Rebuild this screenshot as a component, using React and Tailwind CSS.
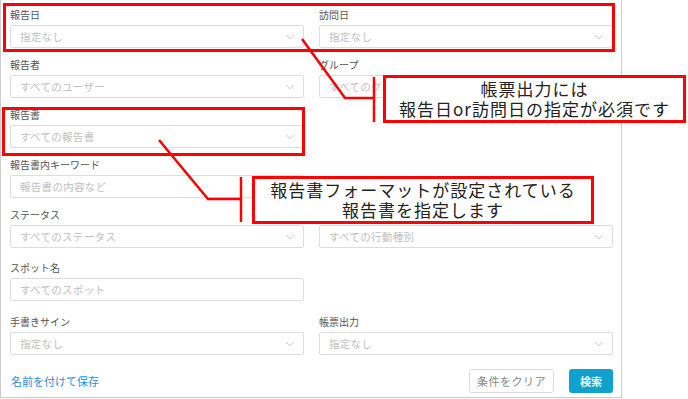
import { ChevronDown } from "lucide-react"

const font = { fontFamily: '"Noto Sans CJK JP", "Noto Sans", sans-serif' }

function Field({ label, placeholder, select = true, className = "" }) {
  return (
    <div className={className}>
      <p className="h-4 text-[10px] leading-4 text-[#555]">{label}</p>
      <div className="mt-[2px] h-[23px] border border-[#ddd] rounded-[2px] flex items-center justify-between pl-[9px] pr-[6px]">
        <span className="text-[10.5px] text-[#c0c0c0] tracking-[0.3px] whitespace-nowrap overflow-hidden">{placeholder}</span>
        {select && <ChevronDown size={14} strokeWidth={1.2} className="text-[#aaa] shrink-0" />}
      </div>
    </div>
  )
}

export default function App() {
  return (
    <div className="relative w-[688px] h-[399px] bg-white overflow-hidden" style={font}>
      {/* パネル */}
      <div className="w-[622px] h-[398px] border-x border-b border-[#ccc] pl-[9px] pr-[8px] pt-[7px]">
        <div className="grid grid-cols-2 gap-x-[15px] gap-y-[9px]">
          <Field label="報告日" placeholder="指定なし" />
          <Field label="訪問日" placeholder="指定なし" />
          <Field label="報告者" placeholder="すべてのユーザー" />
          <Field label="グループ" placeholder="すべてのグル" />
          <Field label="報告書" placeholder="すべての報告書" />
          <div />
          <Field label="報告書内キーワード" placeholder="報告書の内容など" select={false} />
          <div />
          <Field label="ステータス" placeholder="すべてのステータス" />
          <Field label="" placeholder="すべての行動種別" />
        </div>
        <div className="grid grid-cols-2 gap-x-[15px] mt-[12px]">
          <Field label="スポット名" placeholder="すべてのスポット" select={false} />
          <div />
        </div>
        <div className="grid grid-cols-2 gap-x-[15px] mt-[13px]">
          <Field label="手書きサイン" placeholder="指定なし" />
          <Field label="帳票出力" placeholder="指定なし" />
        </div>
        <div className="flex items-center justify-between mt-[14px]">
          <a className="text-[11px] text-[#2a8de0] pl-[1px]">名前を付けて保存</a>
          <div className="flex gap-[15px]">
            <button className="w-[85px] h-[24px] border border-[#ddd] rounded-[3px] text-[11px] text-[#888] tracking-[0.5px]">
              条件をクリア
            </button>
            <button className="w-[44px] h-[24px] rounded-[3px] bg-[#10a2cb] text-[11px] text-white font-bold">
              検索
            </button>
          </div>
        </div>
      </div>

      {/* 注釈 */}
      <div className="absolute left-[3px] top-[3px] w-[612px] h-[49px] border-[3px] border-[#f00]" />
      <div className="absolute left-[2px] top-[107px] w-[303px] h-[49px] border-[3px] border-[#f00]" />
      <svg className="absolute left-0 top-0" width="688" height="399">
        <g stroke="#f00" strokeWidth="2.5" fill="none">
          <polyline points="302,39 345,98 373,98" />
          <line x1="374" y1="77" x2="374" y2="122" />
          <polyline points="159,140 208,199 240,199" />
          <line x1="241" y1="177" x2="241" y2="222" />
        </g>
      </svg>
      <div className="absolute left-[383px] top-[75px] w-[303px] h-[48px] border-[3px] border-[#f00] bg-white flex flex-col items-center justify-center text-[17px] leading-[20px] tracking-[1px] text-[#222]">
        <p>帳票出力には</p>
        <p>報告日or訪問日の指定が必須です</p>
      </div>
      <div className="absolute left-[252px] top-[176px] w-[342px] h-[48px] border-[3px] border-[#f00] bg-white flex flex-col items-center justify-center text-[17px] leading-[20px] tracking-[1px] text-[#222]">
        <p>報告書フォーマットが設定されている</p>
        <p>報告書を指定します</p>
      </div>
    </div>
  )
}
